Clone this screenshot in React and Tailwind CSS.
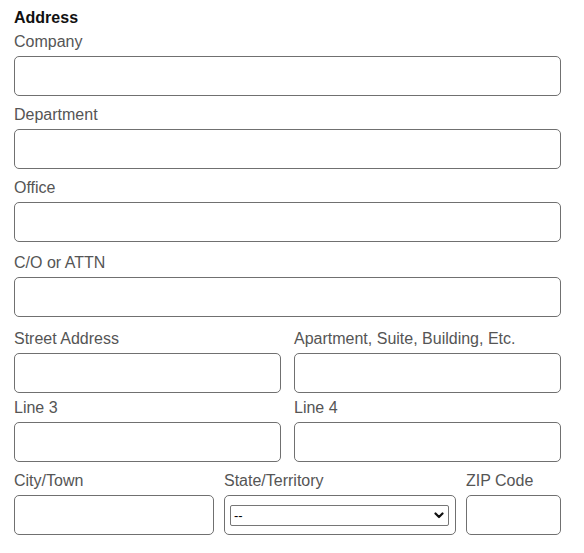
function Field({ label, className = "" }) {
  return (
    <div className={className}>
      <label className="block text-base leading-[20px] text-[#555]">{label}</label>
      <input
        type="text"
        className="mt-[4px] block h-[40px] w-full rounded-[5px] border border-[#707070] bg-white px-2 outline-none"
      />
    </div>
  );
}

function StateSelect() {
  return (
    <div>
      <label className="block text-base leading-[20px] text-[#555]">State/Territory</label>
      <div className="mt-[4px] flex h-[40px] items-center rounded-[5px] border border-[#707070] bg-white pl-[5px] pr-[6px]">
        <div className="relative w-full">
          <select className="block h-[21px] w-full appearance-none rounded-[2px] border border-[#767676] bg-white pl-[3px] text-[13px] leading-[19px] text-black outline-none">
            <option>--</option>
          </select>
          <svg
            className="pointer-events-none absolute right-[5px] top-[7px]"
            width="10"
            height="7"
            viewBox="0 0 10 7"
          >
            <path d="M1.5 1.5 L5 5 L8.5 1.5" fill="none" stroke="#111" strokeWidth="2.2" strokeLinecap="round" strokeLinejoin="round" />
          </svg>
        </div>
      </div>
    </div>
  );
}

export default function App() {
  return (
    <div className="min-h-screen bg-white pl-[14px] pr-[23px] pt-[9px] font-['Liberation_Sans',Arial,sans-serif]">
      <h3 className="text-base font-bold leading-[18px] text-[#111]">Address</h3>
      <Field label="Company" className="mt-[5px]" />
      <Field label="Department" className="mt-[9px]" />
      <Field label="Office" className="mt-[9px]" />
      <Field label="C/O or ATTN" className="mt-[11px]" />
      <div className="mt-[12px] grid grid-cols-2 gap-x-[13px]">
        <Field label="Street Address" />
        <Field label="Apartment, Suite, Building, Etc." />
      </div>
      <div className="mt-[5px] grid grid-cols-2 gap-x-[13px]">
        <Field label="Line 3" />
        <Field label="Line 4" />
      </div>
      <div className="mt-[9px] grid grid-cols-[200px_1fr_95px] gap-x-[10px]">
        <Field label="City/Town" />
        <StateSelect />
        <Field label="ZIP Code" />
      </div>
    </div>
  );
}
